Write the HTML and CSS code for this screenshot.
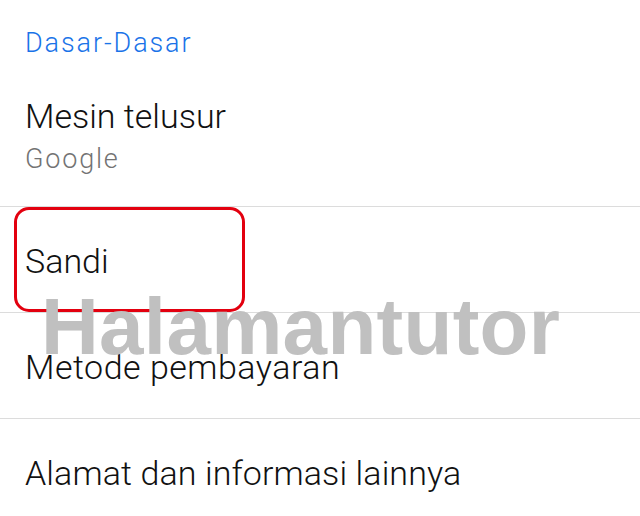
FILE: index.html
```html
<!DOCTYPE html>
<html lang="id">
<head>
<meta charset="utf-8">
<link rel="stylesheet" href="styles.css">
</head>
<body>
<div class="page">
  <div class="section-title">Dasar-Dasar</div>
  <div class="row row-first">
    <div class="row-title">Mesin telusur</div>
    <div class="row-sub">Google</div>
  </div>
  <div class="row row-marked">
    <div class="row-title">Sandi</div>
    <div class="highlight"></div>
  </div>
  <div class="row">
    <div class="row-title title-wide">Metode pembayaran</div>
  </div>
  <div class="row">
    <div class="row-title title-narrow">Alamat dan informasi lainnya</div>
  </div>
  <div class="watermark">Halamantutor</div>
</div>
</body>
</html>
```

FILE: styles.css
```css
html, body {
  margin: 0;
  padding: 0;
  background: #ffffff;
}
.page {
  position: relative;
  width: 640px;
  height: 516px;
  overflow: hidden;
  font-family: Roboto, "Noto Sans", sans-serif;
}
.section-title {
  padding: 27px 25px 0;
  font-size: 27px;
  line-height: 32px;
  font-weight: 300;
  letter-spacing: 1.9px;
  color: #1a73e8;
}
.row {
  position: relative;
  border-top: 1px solid #dcdcdc;
  padding: 34px 25px 31px;
}
.row-first {
  border-top: none;
  padding: 37px 25px 31px;
}
.row-title {
  font-size: 34px;
  line-height: 40px;
  font-weight: 300;
  color: #111111;
}
.title-wide {
  letter-spacing: 0.5px;
}
.title-narrow {
  letter-spacing: 0.1px;
}
.row-sub {
  font-size: 27px;
  line-height: 32px;
  font-weight: 300;
  letter-spacing: 1.8px;
  color: #737373;
  margin-top: 7px;
}
.highlight {
  position: absolute;
  left: 14px;
  top: 0;
  width: 225px;
  height: 99px;
  border: 3px solid #e3000f;
  border-radius: 15px;
}
.watermark {
  position: absolute;
  left: 41px;
  top: 287px;
  font-family: "Liberation Sans", Arial, sans-serif;
  font-weight: bold;
  font-size: 80px;
  line-height: 80px;
  color: #c0c0c0;
  letter-spacing: 0.3px;
}
```
